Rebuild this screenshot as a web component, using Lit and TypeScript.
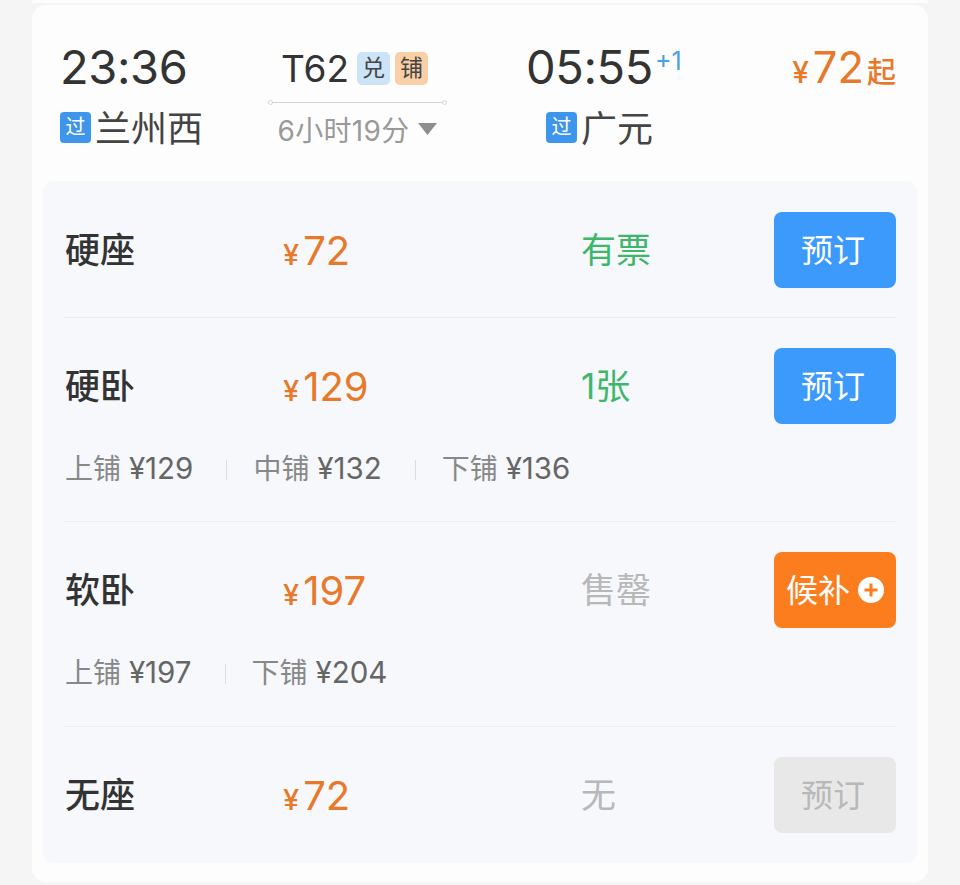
import {html, css, LitElement, nothing} from 'lit';
import {customElement} from 'lit/decorators.js';

interface Seat {
  name: string;
  price: string;
  status: string;
  tone: 'ok' | 'none';
  action: 'book' | 'wait' | 'off';
  berths?: string[];
}

const seats: Seat[] = [
  {name: '硬座', price: '72', status: '有票', tone: 'ok', action: 'book'},
  {
    name: '硬卧',
    price: '129',
    status: '1张',
    tone: 'ok',
    action: 'book',
    berths: ['上铺 ¥129', '中铺 ¥132', '下铺 ¥136'],
  },
  {
    name: '软卧',
    price: '197',
    status: '售罄',
    tone: 'none',
    action: 'wait',
    berths: ['上铺 ¥197', '下铺 ¥204'],
  },
  {name: '无座', price: '72', status: '无', tone: 'none', action: 'off'},
];

@customElement('app-root')
export class AppRoot extends LitElement {
  static styles = css`
    :host {
      display: block;
      height: 885px;
      overflow: hidden;
      background: #f5f5f6;
      font-family: Inter, 'Noto Sans CJK SC', sans-serif;
      color: #333;
    }

    .prev {
      height: 3px;
      margin: 0 32px 2px;
      background: #fdfdfe;
    }

    .card {
      margin: 0 32px;
      height: 877px;
      box-sizing: border-box;
      padding: 0 11px;
      background: #fdfdfe;
      border-radius: 14px;
    }

    .head {
      display: grid;
      grid-template-columns: 208px 179px 79px 1fr auto;
      height: 176px;
      box-sizing: border-box;
      padding: 34px 21px 0 17px;
    }

    .time {
      font-size: 47px;
      line-height: 56px;
      letter-spacing: -0.4px;
      white-space: nowrap;
    }

    .time sup {
      font-size: 25px;
      line-height: 0;
      letter-spacing: 0;
      color: #4f9ede;
      vertical-align: 14px;
      margin-left: 2px;
    }

    .station {
      display: flex;
      align-items: flex-start;
      gap: 4px;
      height: 36px;
      margin-top: 14px;
      font-size: 36px;
      line-height: 36px;
      color: #444;
      white-space: nowrap;
    }

    .station.arr {
      padding-left: 20px;
    }

    .station .label {
      padding-top: 2px;
    }

    .pass {
      width: 31px;
      height: 31px;
      margin-top: 3px;
      border-radius: 4px;
      background: #3e96ec;
      color: #fff;
      font-size: 20px;
      line-height: 31px;
      text-align: center;
    }

    .train {
      display: flex;
      align-items: center;
      flex-direction: column;
    }

    .code {
      display: flex;
      align-items: center;
      gap: 5px;
      height: 34px;
      margin-top: 12px;
      font-size: 37px;
      padding-right: 6px;
    }

    .code .no {
      margin-right: 3px;
    }

    .tag {
      width: 33px;
      height: 33px;
      border-radius: 5px;
      font-size: 23px;
      line-height: 32px;
      text-align: center;
      color: #444;
    }

    .tag.blue {
      background: #cde3f8;
    }

    .tag.peach {
      background: #f9cfa6;
    }

    .line {
      position: relative;
      align-self: stretch;
      height: 1px;
      margin-top: 17px;
      background: #d6d6d8;
    }

    .line::before,
    .line::after {
      content: '';
      position: absolute;
      top: -2px;
      width: 3px;
      height: 3px;
      border: 1px solid #d6d6d8;
      border-radius: 50%;
      background: #fdfdfe;
    }

    .line::before {
      left: 0;
    }

    .line::after {
      right: 0;
    }

    .dur {
      display: flex;
      align-items: center;
      gap: 9px;
      margin-top: 8px;
      height: 36px;
      font-size: 28px;
      letter-spacing: 0.3px;
      color: #999;
      white-space: nowrap;
    }

    .dur svg {
      width: 19px;
      height: 12px;
      fill: #8e8e8e;
    }

    .from {
      display: flex;
      align-items: baseline;
      height: 56px;
      color: #e8792a;
      font-size: 43.5px;
      line-height: 56px;
      white-space: nowrap;
    }

    .from .cur {
      font-size: 30px;
      font-weight: 500;
      margin-right: 4px;
    }

    .from .suffix {
      font-size: 29px;
      font-weight: 500;
      margin-left: 3px;
    }

    .panel {
      height: 682px;
      box-sizing: border-box;
      padding: 0 21px;
      background: #f6f8fc;
      border-radius: 10px;
    }

    .seat {
      box-sizing: border-box;
      padding-top: 31px;
      border-bottom: 1px solid #ebedf1;
    }

    .seat:nth-child(1) {
      height: 137px;
    }

    .seat:nth-child(2) {
      height: 204px;
      padding-top: 30px;
    }

    .seat:nth-child(3) {
      height: 205px;
      padding-top: 30px;
    }

    .seat:last-child {
      border-bottom: none;
      padding-top: 30px;
    }

    .main {
      display: grid;
      grid-template-columns: 218px 299px 193px 122px;
      align-items: center;
      height: 76px;
    }

    .name {
      padding: 0 0 5px 1px;
      font-size: 35px;
      font-weight: 500;
      color: #333;
    }

    .price {
      padding-left: 1px;
      color: #e8792a;
      font-size: 40px;
      white-space: nowrap;
    }

    .price .cur {
      font-size: 29px;
      font-weight: 500;
      margin-right: 4px;
    }

    .status {
      padding-bottom: 5px;
      font-size: 35px;
      white-space: nowrap;
    }

    .status.ok {
      color: #3eb76a;
    }

    .status.none {
      color: #b8b8b8;
    }

    .btn {
      display: flex;
      align-items: center;
      justify-content: center;
      gap: 8px;
      box-sizing: border-box;
      height: 76px;
      padding: 0 4px 4px 0;
      border-radius: 8px;
      font-size: 32px;
      color: #fff;
      background: #3b9afc;
    }

    .btn.wait {
      padding-right: 0;
      background: #fb7d1e;
    }

    .btn.off {
      background: #e8e8e9;
      color: #b8b8b8;
    }

    .btn svg {
      width: 26px;
      height: 26px;
      margin-top: 4px;
    }

    .berths {
      display: flex;
      align-items: center;
      margin-top: 25px;
      height: 36px;
      font-size: 28px;
      color: #888;
      white-space: nowrap;
    }

    .berth {
      padding-left: 1px;
    }

    .berth b {
      font-size: 29.5px;
      font-weight: 400;
      color: #666;
    }

    .sep {
      width: 1px;
      height: 20px;
      margin: 6px 25px 0 33px;
      background: #dcdde0;
    }
  `;

  private renderBerth(text: string, index: number) {
    const [label, price] = text.split(' ');
    return html`
      ${index > 0 ? html`<i class="sep"></i>` : nothing}
      <span class="berth">${label} <b>${price}</b></span>
    `;
  }

  private renderAction(action: Seat['action']) {
    if (action === 'wait') {
      return html`<div class="btn wait">
        候补
        <svg viewBox="0 0 26 26">
          <circle cx="13" cy="13" r="13" fill="#fff" />
          <path d="M13 6.5v13M6.5 13h13" stroke="#fb7d1e" stroke-width="3" />
        </svg>
      </div>`;
    }
    return html`<div class="btn ${action === 'off' ? 'off' : ''}">预订</div>`;
  }

  private renderSeat(seat: Seat) {
    return html`
      <div class="seat">
        <div class="main">
          <span class="name">${seat.name}</span>
          <span class="price"><span class="cur">¥</span>${seat.price}</span>
          <span class="status ${seat.tone}">${seat.status}</span>
          ${this.renderAction(seat.action)}
        </div>
        ${seat.berths
          ? html`<div class="berths">
              ${seat.berths.map((b, i) => this.renderBerth(b, i))}
            </div>`
          : nothing}
      </div>
    `;
  }

  render() {
    return html`
      <div class="prev"></div>
      <div class="card">
        <div class="head">
          <div>
            <div class="time">23:36</div>
            <div class="station">
              <span class="pass">过</span><span class="label">兰州西</span>
            </div>
          </div>
          <div class="train">
            <div class="code">
              <span class="no">T62</span>
              <span class="tag blue">兑</span>
              <span class="tag peach">铺</span>
            </div>
            <div class="line"></div>
            <div class="dur">
              6小时19分
              <svg viewBox="0 0 19 12"><path d="M0 0h19l-9.5 12z" /></svg>
            </div>
          </div>
          <div></div>
          <div>
            <div class="time">05:55<sup>+1</sup></div>
            <div class="station arr">
              <span class="pass">过</span><span class="label">广元</span>
            </div>
          </div>
          <div class="from">
            <span class="cur">¥</span>72<span class="suffix">起</span>
          </div>
        </div>
        <div class="panel">${seats.map((s) => this.renderSeat(s))}</div>
      </div>
    `;
  }
}
